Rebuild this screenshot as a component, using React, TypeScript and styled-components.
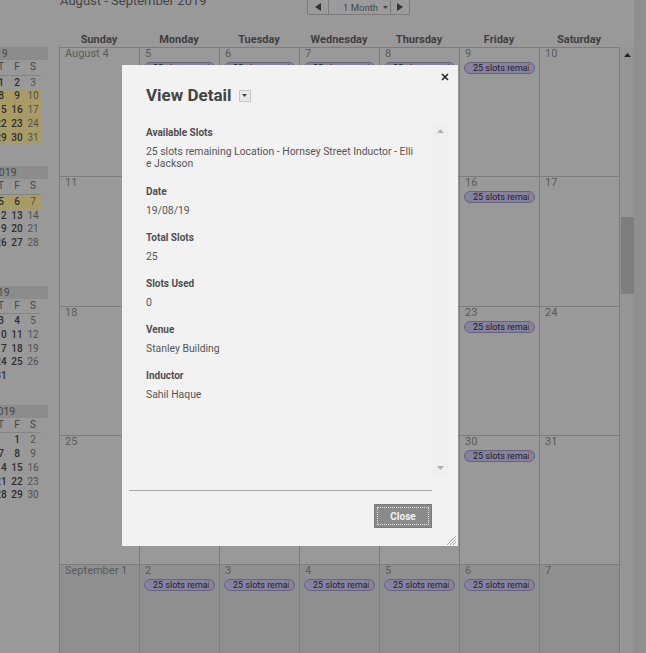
import React from "react";
import styled, { createGlobalStyle } from "styled-components";

const GlobalStyle = createGlobalStyle`
  html, body { margin: 0; padding: 0; }
  body {
    background: #999999;
    font-family: Roboto, "Liberation Sans", Arial, sans-serif;
    overflow: hidden;
  }
  * { box-sizing: border-box; }
`;

type MiniMonth = { name: string; start: number; days: number; month: number };

const miniMonths: MiniMonth[] = [
  { name: "August 2019", start: 4, days: 31, month: 8 },
  { name: "September 2019", start: 0, days: 30, month: 9 },
  { name: "October 2019", start: 2, days: 31, month: 10 },
  { name: "November 2019", start: 5, days: 30, month: 11 },
];

const weeks = [
  { first: "August 4", days: [4, 5, 6, 7, 8, 9, 10], muted: false },
  { first: "", days: [11, 12, 13, 14, 15, 16, 17], muted: false },
  { first: "", days: [18, 19, 20, 21, 22, 23, 24], muted: false },
  { first: "", days: [25, 26, 27, 28, 29, 30, 31], muted: false },
  { first: "September 1", days: [1, 2, 3, 4, 5, 6, 7], muted: true },
];

const dayNames = ["Sunday", "Monday", "Tuesday", "Wednesday", "Thursday", "Friday", "Saturday"];

const fields = [
  { label: "Available Slots", value: "25 slots remaining Location - Hornsey Street Inductor - Ellie Jackson" },
  { label: "Date", value: "19/08/19" },
  { label: "Total Slots", value: "25" },
  { label: "Slots Used", value: "0" },
  { label: "Venue", value: "Stanley Building" },
  { label: "Inductor", value: "Sahil Haque" },
];

function isHighlighted(month: number, day: number) {
  if (month === 8) return day >= 4;
  if (month === 9) return day <= 7;
  return false;
}

function MiniCalendar({ m }: { m: MiniMonth }) {
  const cells: (number | null)[] = [];
  for (let i = 0; i < m.start; i++) cells.push(null);
  for (let d = 1; d <= m.days; d++) cells.push(d);
  while (cells.length < 42) cells.push(null);
  return (
    <MiniSld>
      <MiniTitle>{m.name}</MiniTitle>
      <MiniGrid>
        {["S", "M", "T", "W", "T", "F", "S"].map((d, i) => (
          <MiniHead key={i}>{d}</MiniHead>
        ))}
        {cells.map((d, i) => (
          <MiniDay key={i} $weekend={i % 7 === 0 || i % 7 === 6} $on={d !== null && isHighlighted(m.month, d)}>
            {d ?? ""}
          </MiniDay>
        ))}
      </MiniGrid>
    </MiniSld>
  );
}

function App() {
  return (
    <>
      <GlobalStyle />
      <PageSld>
        <SidebarSld>
          {miniMonths.map((m) => (
            <MiniCalendar key={m.name} m={m} />
          ))}
        </SidebarSld>
        <MainSld>
          <ToolbarSld>
            <TitleSld>August - September 2019</TitleSld>
            <NavGroupSld>
              <NavBtnSld $w={22}>
                <svg width="6" height="8" viewBox="0 0 6 8"><path d="M6 0 L0 4 L6 8 Z" fill="#333" /></svg>
              </NavBtnSld>
              <NavBtnSld $w={63}>
                <MonthLabelSld>1 Month</MonthLabelSld>
                <svg width="5" height="3" viewBox="0 0 5 3"><path d="M0 0 L5 0 L2.5 3 Z" fill="#444" /></svg>
              </NavBtnSld>
              <NavBtnSld $w={20}>
                <svg width="6" height="8" viewBox="0 0 6 8"><path d="M0 0 L6 4 L0 8 Z" fill="#333" /></svg>
              </NavBtnSld>
            </NavGroupSld>
          </ToolbarSld>
          <DayHeadRowSld>
            {dayNames.map((d) => (
              <DayHeadSld key={d}>{d}</DayHeadSld>
            ))}
          </DayHeadRowSld>
          <BodySld>
            <MonthGridSld>
              {weeks.map((w) =>
                w.days.map((d, i) => (
                  <CellSld key={`${w.first}-${d}-${i}`} $muted={w.muted}>
                    <CellNumSld>{i === 0 && w.first ? w.first : d}</CellNumSld>
                    {i > 0 && i < 6 && (
                      <PillSld>
                        <PillTextSld>25 slots remaining</PillTextSld>
                      </PillSld>
                    )}
                  </CellSld>
                ))
              )}
            </MonthGridSld>
            <TrackSld>
              <svg width="7" height="4" viewBox="0 0 7 4"><path d="M0 4 L3.5 0 L7 4 Z" fill="#222" /></svg>
              <ThumbSld />
            </TrackSld>
          </BodySld>
        </MainSld>
        <EdgeSld />

        <DialogSld>
          <CloseXSld>
            <svg width="8" height="8" viewBox="0 0 8 8">
              <path d="M1 1 L7 7 M7 1 L1 7" stroke="#2b2b2b" strokeWidth="1.7" />
            </svg>
          </CloseXSld>
          <DialogHeadSld>
            <DialogTitleSld>View Detail</DialogTitleSld>
            <MenuBoxSld>
              <svg width="5" height="3" viewBox="0 0 5 3"><path d="M0 0 L5 0 L2.5 3 Z" fill="#444" /></svg>
            </MenuBoxSld>
          </DialogHeadSld>
          <DialogBodySld>
            <FieldsSld>
              {fields.map((f) => (
                <FieldSld key={f.label}>
                  <FieldLabelSld>{f.label}</FieldLabelSld>
                  <FieldValueSld>{f.value}</FieldValueSld>
                </FieldSld>
              ))}
            </FieldsSld>
            <InnerTrackSld>
              <svg width="7" height="4" viewBox="0 0 7 4"><path d="M0 4 L3.5 0 L7 4 Z" fill="#b0b0b0" /></svg>
              <svg width="7" height="4" viewBox="0 0 7 4"><path d="M0 0 L7 0 L3.5 4 Z" fill="#b0b0b0" /></svg>
            </InnerTrackSld>
          </DialogBodySld>
          <DividerSld />
          <FooterSld>
            <CloseBtnSld>Close</CloseBtnSld>
          </FooterSld>
          <GripSld width="10" height="10" viewBox="0 0 10 10">
            <path d="M10 1 L1 10 M10 4 L4 10 M10 7 L7 10" stroke="#a8a8a8" strokeWidth="1" />
          </GripSld>
        </DialogSld>
      </PageSld>
    </>
  );
}

const PageSld = styled.div`
    position: relative;
    display: flex;
    width: 646px;
    height: 653px;
    overflow: hidden;
    background: #999999;
`;

const SidebarSld = styled.div`
    width: 48px;
    flex-shrink: 0;
    overflow: hidden;
    padding-top: 47px;
    margin-right: 11px;
`;

const MiniSld = styled.div`
    width: 140px;
    margin-left: -92px;
    margin-bottom: 8.3px;
`;

const MiniTitle = styled.div`
    height: 13px;
    line-height: 13px;
    background: #8c8c8c;
    color: #474747;
    font-size: 10.5px;
    text-align: center;
`;

const MiniGrid = styled.div`
    display: grid;
    grid-template-columns: repeat(7, 16px);
    grid-template-rows: 15.5px repeat(6, 13.75px);
    width: 112px;
    margin-left: 21px;
`;

const MiniHead = styled.div`
    font-size: 10px;
    line-height: 14.5px;
    text-align: center;
    color: #444;
    border-bottom: 1px solid #858585;
`;

const MiniDay = styled.div<{ $weekend: boolean; $on: boolean }>`
    font-size: 10px;
    line-height: 13.75px;
    text-align: center;
    color: ${(p) => (p.$weekend ? "#505050" : "#2e2e2e")};
    font-weight: ${(p) => (p.$weekend ? 400 : 500)};
    background: ${(p) => (p.$on ? "#a99b66" : "transparent")};
`;

const MainSld = styled.div`
    width: 575px;
    flex-shrink: 0;
    display: flex;
    flex-direction: column;
`;

const ToolbarSld = styled.div`
    display: grid;
    grid-template-columns: 248px auto;
    height: 32px;
    align-items: start;
`;

const TitleSld = styled.div`
    margin-top: -7px;
    padding-left: 1px;
    font-size: 13px;
    line-height: 15px;
    color: #454545;
    white-space: nowrap;
`;

const NavGroupSld = styled.div`
    display: flex;
    margin-top: -1px;
`;

const NavBtnSld = styled.div<{ $w: number }>`
    width: ${(p) => p.$w}px;
    height: 16px;
    display: flex;
    align-items: center;
    justify-content: center;
    border: 1px solid #7a7a7a;
    margin-left: -1px;
    background: #9b9b9b;
    font-size: 9.5px;
    color: #474747;
    &:first-child { border-radius: 2px 0 0 2px; margin-left: 0; }
    &:last-child { border-radius: 0 2px 2px 0; }
`;

const MonthLabelSld = styled.span`
    margin: 0 5px 0 12px;
`;

const DayHeadRowSld = styled.div`
    display: grid;
    grid-template-columns: repeat(7, 80px);
    height: 15px;
`;

const DayHeadSld = styled.div`
    text-align: center;
    font-size: 11px;
    font-weight: 700;
    line-height: 15px;
    color: #3f3f3f;
`;

const BodySld = styled.div`
    display: flex;
    flex: 1;
    min-height: 0;
`;

const MonthGridSld = styled.div`
    display: grid;
    grid-template-columns: repeat(7, 80px);
    grid-auto-rows: 129.3px;
    width: 561px;
    border-left: 1px solid #7c7c7c;
    border-top: 1px solid #7c7c7c;
    overflow: hidden;
    align-content: start;
`;

const CellSld = styled.div<{ $muted: boolean }>`
    border-right: 1px solid #7c7c7c;
    border-bottom: 1px solid #7c7c7c;
    background: ${(p) => (p.$muted ? "#8f8f8f" : "#999999")};
    padding: 0 4px;
    overflow: hidden;
`;

const CellNumSld = styled.div`
    font-size: 11px;
    line-height: 12px;
    color: #5a5a5a;
    padding-left: 1px;
`;

const PillSld = styled.div`
    margin-top: 2px;
    height: 12px;
    border: 1px solid #67637c;
    border-radius: 6px;
    background: #86819c;
    padding: 0 5px 0 8px;
`;

const PillTextSld = styled.span`
    display: block;
    overflow: hidden;
    white-space: nowrap;
    color: #1e1d2a;
    font-size: 9px;
    line-height: 10px;
`;

const TrackSld = styled.div`
    width: 14px;
    background: #959595;
    display: flex;
    flex-direction: column;
    align-items: center;
    padding-top: 6px;
`;

const ThumbSld = styled.div`
    width: 13px;
    height: 77px;
    margin-top: 160px;
    margin-left: 1px;
    background: #7e7e7e;
`;

const EdgeSld = styled.div`
    flex: 1;
    background: #8f8f8f;
`;

const DialogSld = styled.div`
    position: absolute;
    left: 122px;
    top: 65px;
    width: 336px;
    height: 481px;
    background: #f2f2f2;
    padding-top: 19px;
    display: flex;
    flex-direction: column;
`;

const CloseXSld = styled.div`
    position: absolute;
    top: 8px;
    right: 9px;
    width: 8px;
    height: 8px;
    display: flex;
`;

const DialogHeadSld = styled.div`
    display: flex;
    align-items: center;
    height: 22px;
    padding-left: 24px;
`;

const DialogTitleSld = styled.div`
    font-size: 17px;
    font-weight: 700;
    color: #444;
    line-height: 22px;
`;

const MenuBoxSld = styled.div`
    width: 12px;
    height: 12px;
    margin-left: 7px;
    margin-top: 1px;
    border: 1px solid #c6c6c6;
    background: #e9e9e9;
    display: flex;
    align-items: center;
    justify-content: center;
`;

const DialogBodySld = styled.div`
    display: flex;
    height: 356px;
    margin-top: 16px;
    margin-left: 24px;
    width: 302px;
`;

const FieldsSld = styled.div`
    flex: 1;
    padding: 5px 18px 0 0;
`;

const FieldSld = styled.div`
    margin-bottom: 15px;
    &:first-child { margin-bottom: 16px; }
`;

const FieldLabelSld = styled.div`
    font-size: 10px;
    font-weight: 700;
    line-height: 12px;
    color: #4f4f4f;
    margin-bottom: 7px;
`;

const FieldValueSld = styled.div`
    font-size: 10.4px;
    line-height: 12px;
    color: #555;
    word-break: break-all;
`;

const InnerTrackSld = styled.div`
    width: 16px;
    background: #efefef;
    display: flex;
    flex-direction: column;
    align-items: center;
    justify-content: space-between;
    padding: 7px 0 8px;
`;

const DividerSld = styled.div`
    margin: 12px 0 0 7px;
    width: 303px;
    height: 1px;
    background: #a9a9a9;
`;

const FooterSld = styled.div`
    display: flex;
    justify-content: flex-end;
    padding: 13px 26px 0 0;
`;

const CloseBtnSld = styled.div`
    position: relative;
    width: 58px;
    height: 24px;
    background: #8a8a8a;
    border: 1px solid #7a7a7a;
    color: #f2f2f2;
    font-size: 10px;
    font-weight: 700;
    display: flex;
    align-items: center;
    justify-content: center;
    &::after {
        content: "";
        position: absolute;
        inset: 2px;
        border: 1px dotted #e6e6e6;
    }
`;

const GripSld = styled.svg`
    position: absolute;
    right: 2px;
    bottom: 1px;
`;

export default App;
